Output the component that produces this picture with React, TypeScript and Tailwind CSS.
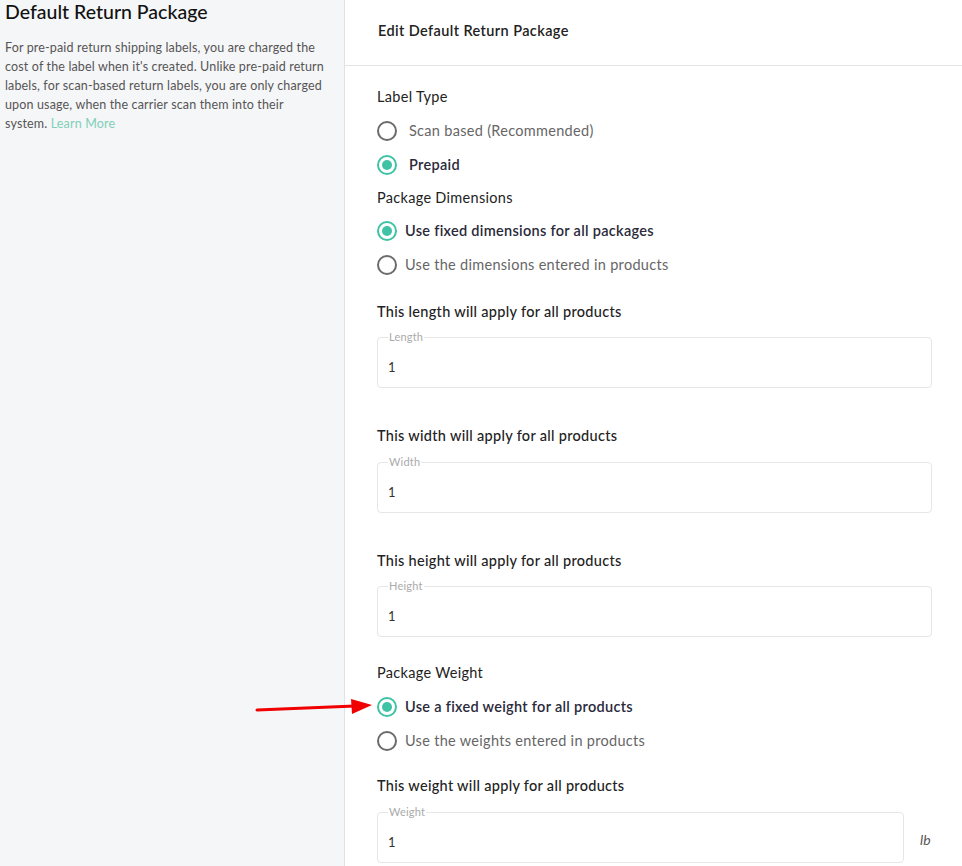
import React from "react";

const font = { fontFamily: "Lato, 'Noto Sans', sans-serif" };

function Radio({ checked, label, strong, gap = "gap-3" }: { checked?: boolean; label: string; strong?: boolean; gap?: string }) {
  return (
    <label className={`flex items-center ${gap} h-[34px]`}>
      {checked ? (
        <span className="flex h-5 w-5 items-center justify-center rounded-full border-2 border-[#3fc2a5]">
          <span className="h-[10px] w-[10px] rounded-full bg-[#3fc2a5]" />
        </span>
      ) : (
        <span className="h-5 w-5 rounded-full border-2 border-[#6b6b6b]" />
      )}
      <span className={`text-[14.5px] tracking-[0.3px] ${strong ? "font-semibold text-[#2a2a3a]" : "text-[#666]"}`}>{label}</span>
    </label>
  );
}

function Field({ legend, value }: { legend: string; value: string }) {
  return (
    <fieldset className="flex-1 rounded-[4px] border border-[#e6e6e6] px-[10px] pb-[12px]">
      <legend className="px-[1px] text-[11px] leading-[12px] tracking-[0.2px] text-[#aaa]">{legend}</legend>
      <div className="pt-[16px] text-[13px] leading-[16px] text-[#333]">{value}</div>
    </fieldset>
  );
}

export default function App() {
  return (
    <div className="relative flex min-h-[866px] bg-white" style={font}>
      <aside className="w-[345px] shrink-0 border-r border-[#dfe2e8] bg-[#f5f6f8] pl-[5px] pr-4 pt-[1px]">
        <h1 className="text-[19.5px] leading-[22px] font-medium text-[#111]">Default Return Package</h1>
        <p className="mt-[15px] w-[320px] text-[12.5px] leading-[19px] tracking-[0.15px] text-[#555]">
          For pre-paid return shipping labels, you are charged the cost of the label when it's created. Unlike pre-paid return
          labels, for scan-based return labels, you are only charged upon usage, when the carrier scan them into their system.{" "}
          <a className="text-[#7fcfb9]">Learn More</a>
        </p>
      </aside>

      <main className="flex-1">
        <div className="flex h-[66px] items-center border-b border-[#e3e3e3] px-[33px] pb-[4px]">
          <h2 className="text-[14.5px] font-semibold tracking-[0.4px] text-[#222]">Edit Default Return Package</h2>
        </div>

        <div className="px-[32px] pr-[30px] pt-[21px]">
          <div className="text-[14.5px] leading-[20px] tracking-[0.3px] text-[#222]">Label Type</div>
          <div className="mt-[7px]">
            <Radio label="Scan based (Recommended)" />
            <Radio checked strong label="Prepaid" />
          </div>
          <div className="mt-[6px] text-[14.5px] leading-[20px] tracking-[0.3px] text-[#222]">Package Dimensions</div>
          <div className="mt-[6px]">
            <Radio checked strong gap="gap-[8px]" label="Use fixed dimensions for all packages" />
            <Radio gap="gap-[8px]" label="Use the dimensions entered in products" />
          </div>

          <div className="mt-[20px] text-[14.5px] font-medium leading-[20px] tracking-[0.3px] text-[#222]">This length will apply for all products</div>
          <div className="mt-[9px] flex">
            <Field legend="Length" value="1" />
          </div>

          <div className="mt-[38px] text-[14.5px] font-medium leading-[20px] tracking-[0.3px] text-[#222]">This width will apply for all products</div>
          <div className="mt-[10px] flex">
            <Field legend="Width" value="1" />
          </div>

          <div className="mt-[38px] text-[14.5px] font-medium leading-[20px] tracking-[0.3px] text-[#222]">This height will apply for all products</div>
          <div className="mt-[9px] flex">
            <Field legend="Height" value="1" />
          </div>

          <div className="mt-[26px] text-[14.5px] leading-[20px] tracking-[0.3px] text-[#222]">Package Weight</div>
          <div className="mt-[7px]">
            <Radio checked strong gap="gap-[8px]" label="Use a fixed weight for all products" />
            <Radio gap="gap-[8px]" label="Use the weights entered in products" />
          </div>

          <div className="mt-[18px] text-[14.5px] font-medium leading-[20px] tracking-[0.3px] text-[#222]">This weight will apply for all products</div>
          <div className="mt-[10px] flex items-center">
            <Field legend="Weight" value="1" />
            <span className="w-[28px] pl-[16px] pt-[10px] text-[14px] italic text-[#555]">lb</span>
          </div>
        </div>
      </main>

      {/* annotation arrow */}
      <svg className="pointer-events-none absolute left-[255px] top-[697px]" width="120" height="20" viewBox="0 0 120 20">
        <line x1="2" y1="13" x2="100" y2="9" stroke="#f00000" strokeWidth="3" strokeLinecap="round" />
        <polygon points="96,2 117,8 97,17" fill="#f00000" />
      </svg>
    </div>
  );
}
